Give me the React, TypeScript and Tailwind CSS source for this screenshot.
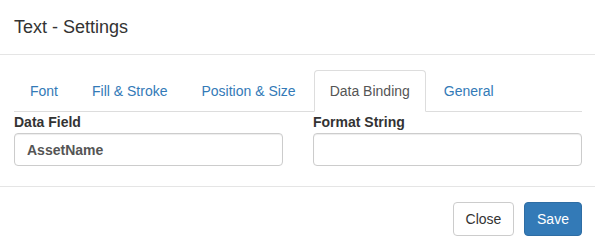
import { useState } from "react";

const tabs = ["Font", "Fill & Stroke", "Position & Size", "Data Binding", "General"];

const TextSettings = () => {
  const [activeTab, setActiveTab] = useState("Data Binding");

  return (
    <div className="w-[595px] h-[249px] bg-white text-[#333] text-[14px] leading-5 font-['Liberation_Sans',Arial,sans-serif]">
      {/* Header */}
      <div className="h-[55px] px-[14px] pt-[14px] border-b border-[#e5e5e5]">
        <h4 className="text-[18px] leading-[26px] m-0">Text - Settings</h4>
      </div>

      {/* Body */}
      <div className="pl-[14px] pr-[13px] pt-[15px] pb-[20px]">
        <ul className="flex border-b border-[#ddd]">
          {tabs.map((tab) => (
            <li key={tab} className="-mb-px mr-[2px]">
              <button
                onClick={() => setActiveTab(tab)}
                className={`block px-[15px] py-[10px] leading-5 rounded-t-[4px] border ${
                  activeTab === tab
                    ? "bg-white text-[#555] border-[#ddd] border-b-transparent"
                    : "text-[#337ab7] border-transparent"
                }`}
              >
                {tab}
              </button>
            </li>
          ))}
        </ul>

        <div className="grid grid-cols-2 gap-[30px]">
          <div>
            <label className="block font-bold leading-5 mb-px">Data Field</label>
            <input
              defaultValue="AssetName"
              className="block w-full h-[33px] px-3 border border-[#ccc] rounded-[4px] font-bold text-[#555] shadow-[inset_0_1px_1px_rgba(0,0,0,0.075)] outline-none"
            />
          </div>
          <div>
            <label className="block font-bold leading-5 mb-px">Format String</label>
            <input className="block w-full h-[33px] px-3 border border-[#ccc] rounded-[4px] text-[#555] shadow-[inset_0_1px_1px_rgba(0,0,0,0.075)] outline-none" />
          </div>
        </div>
      </div>

      {/* Footer */}
      <div className="border-t border-[#e5e5e5] pt-[15px] pr-[13px] flex justify-end gap-[10px]">
        <button className="w-[61px] h-[34px] border border-[#ccc] rounded-[4px] bg-white text-[#333]">Close</button>
        <button className="w-[58px] h-[34px] border border-[#2e6da4] rounded-[4px] bg-[#337ab7] text-white">Save</button>
      </div>
    </div>
  );
};

export default function App() {
  return <TextSettings />;
}
